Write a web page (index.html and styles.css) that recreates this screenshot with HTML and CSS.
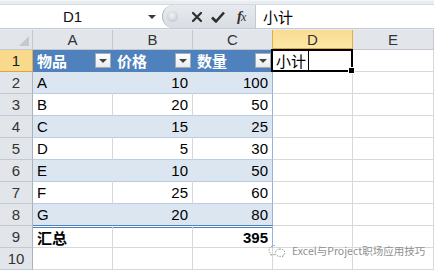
FILE: index.html
```html
<!DOCTYPE html>
<html>
<head>
<meta charset="utf-8">
<link rel="stylesheet" href="styles.css">
</head>
<body>
<div class="app">
  <div class="top">
    <div class="fbar">
      <div class="namebox">
        <span class="name">D1</span>
        <span class="nb-arrow"></span>
      </div>
      <div class="btns">
        <span class="dot"></span>
        <svg class="ico" width="14" height="14" viewBox="0 0 14 14"><path d="M3 3 L11 11 M11 3 L3 11" stroke="#2e2e2e" stroke-width="2.2" stroke-linecap="round"/></svg>
        <svg class="ico" width="16" height="14" viewBox="0 0 16 14"><path d="M2 7.5 L6 11.5 L14 2.5" fill="none" stroke="#2e2e2e" stroke-width="2.6" stroke-linejoin="round"/></svg>
        <span class="fx"><i>f</i><i class="x">x</i></span>
      </div>
      <div class="finput">小计</div>
    </div>
  </div>
  <div class="sheet">
    <div class="hd corner"><span class="tri"></span></div>
    <div class="hd col">A</div>
    <div class="hd col">B</div>
    <div class="hd col">C</div>
    <div class="hd col sel">D</div>
    <div class="hd col">E</div>

    <div class="hd rowh sel">1</div>
    <div class="c th"><span>物品</span><span class="dd"></span></div>
    <div class="c th"><span>价格</span><span class="dd"></span></div>
    <div class="c th"><span>数量</span><span class="dd"></span></div>
    <div class="c active"><span class="edit">小计</span></div>
    <div class="c"></div>

    <div class="hd rowh">2</div>
    <div class="c t band">A</div>
    <div class="c t band num">10</div>
    <div class="c t band num last">100</div>
    <div class="c"></div>
    <div class="c"></div>

    <div class="hd rowh">3</div>
    <div class="c t">B</div>
    <div class="c t num">20</div>
    <div class="c t num last">50</div>
    <div class="c"></div>
    <div class="c"></div>

    <div class="hd rowh">4</div>
    <div class="c t band">C</div>
    <div class="c t band num">15</div>
    <div class="c t band num last">25</div>
    <div class="c"></div>
    <div class="c"></div>

    <div class="hd rowh">5</div>
    <div class="c t">D</div>
    <div class="c t num">5</div>
    <div class="c t num last">30</div>
    <div class="c"></div>
    <div class="c"></div>

    <div class="hd rowh">6</div>
    <div class="c t band">E</div>
    <div class="c t band num">10</div>
    <div class="c t band num last">50</div>
    <div class="c"></div>
    <div class="c"></div>

    <div class="hd rowh">7</div>
    <div class="c t">F</div>
    <div class="c t num">25</div>
    <div class="c t num last">60</div>
    <div class="c"></div>
    <div class="c"></div>

    <div class="hd rowh">8</div>
    <div class="c t band pre">G</div>
    <div class="c t band num pre">20</div>
    <div class="c t band num last pre">80</div>
    <div class="c"></div>
    <div class="c"></div>

    <div class="hd rowh">9</div>
    <div class="c tot">汇总</div>
    <div class="c tot"></div>
    <div class="c tot num last">395</div>
    <div class="c"></div>
    <div class="c"></div>

    <div class="hd rowh">10</div>
    <div class="c"></div>
    <div class="c"></div>
    <div class="c"></div>
    <div class="c"></div>
    <div class="c"></div>
  </div>
  <div class="wm">
    <svg width="18" height="14" viewBox="0 0 18 14"><path d="M7 1.5 C3.5 1.5 1 3.6 1 6.2 C1 7.7 1.8 8.9 3 9.8 L2.5 11.6 L4.6 10.5 C5.3 10.7 6.1 10.8 7 10.8" fill="none" stroke="#a0a0a0" stroke-width="1" stroke-dasharray="1.5 1"/><path d="M12 5 C9.2 5 7.2 6.7 7.2 8.7 C7.2 10.8 9.2 12.4 12 12.4 C12.6 12.4 13.2 12.3 13.700 12.2 L15.4 13 L15 11.6 C16.2 10.9 16.9 9.9 16.9 8.7 C16.9 6.7 14.8 5 12 5 Z" fill="none" stroke="#a0a0a0" stroke-width="1" stroke-dasharray="1.5 1"/></svg>
    <span>Excel与Project职场应用技巧</span>
  </div>
</div>
</body>
</html>
```
FILE: styles.css
```css
* { box-sizing: border-box; }
html, body { margin: 0; padding: 0; }
body {
  width: 434px;
  height: 270px;
  overflow: hidden;
  background: #ffffff;
  font-family: "Liberation Sans", "Noto Sans CJK SC", sans-serif;
  color: #000;
}
.app { position: relative; width: 434px; height: 270px; }

.top {
  height: 30px;
  background: #e9ecf0;
  padding-top: 3px;
  border-top: 1px solid #f4f5f7;
}
.fbar {
  display: flex;
  height: 25px;
  background: #ffffff;
  border-top: 1px solid #d5dae0;
  border-bottom: 1px solid #c4cad2;
}
.namebox {
  width: 162px;
  display: flex;
  align-items: center;
}
.name {
  width: 145px;
  text-align: center;
  font-size: 15px;
  color: #111;
}
.nb-arrow {
  width: 0; height: 0;
  border-left: 4px solid transparent;
  border-right: 4px solid transparent;
  border-top: 4px solid #3a3a3a;
  margin-left: 3px;
}
.btns {
  width: 93px;
  display: flex;
  align-items: center;
  background: linear-gradient(#e7eaee, #d9dee4);
  border-left: 1px solid #aeb6c0;
  border-radius: 13px 0 0 13px;
  padding-left: 4px;
}
.dot {
  width: 11px; height: 11px;
  border-radius: 50%;
  background: radial-gradient(circle at 45% 40%, #f2f4f6 0, #cfd4da 60%, #b9c0c8 100%);
  margin-right: 12px;
}
.ico { display: block; margin-right: 6px; }
.fx {
  font-family: "Liberation Serif", serif;
  font-size: 15px;
  color: #333;
  margin-left: 5px;
  letter-spacing: -1px;
}
.fx i { font-weight: bold; }
.fx .x { font-size: 12px; font-weight: normal; }
.finput {
  flex: 1;
  font-family: "Noto Sans CJK SC", sans-serif;
  font-size: 15px;
  line-height: 23px;
  padding-left: 7px;
  border-left: 1px solid #c4cad2;
}

.sheet {
  display: grid;
  grid-template-columns: 33px 80px 80px 80px 80px 81px;
  grid-template-rows: 20px repeat(10, 22px);
}
.hd {
  background: #e2e6eb;
  border-right: 1px solid #c3c9d1;
  border-bottom: 1px solid #c3c9d1;
  color: #333;
  font-size: 15px;
  display: flex;
  align-items: center;
  justify-content: center;
}
.hd.rowh { border-right-color: #a9b2bd; }
.corner { position: relative; }
.tri {
  position: absolute;
  right: 3px; bottom: 3px;
  width: 0; height: 0;
  border-left: 10px solid transparent;
  border-bottom: 10px solid #c4c9cf;
}
.hd.col.sel {
  background: linear-gradient(#f9dc92, #fde7a5);
  border-left: 1px solid #e5ad4a;
  border-right: 1px solid #e5ad4a;
  border-bottom: 2px solid #e3a33a;
  margin-left: -1px;
}
.hd.rowh.sel {
  background: #f9d98c;
  border-right: 1px solid #e5ad4a;
  border-bottom: 1px solid #e3a33a;
  color: #1a1a1a;
}

.c {
  border-right: 1px solid #d8d8d8;
  border-bottom: 1px solid #d8d8d8;
  font-size: 15px;
  display: flex;
  align-items: center;
  padding: 0 4px;
  white-space: nowrap;
}
.th {
  background: #4f81bd;
  color: #ffffff;
  font-family: "Noto Sans CJK SC", sans-serif;
  font-weight: bold;
  justify-content: space-between;
  padding-right: 1px;
  border-right-color: #4f81bd;
  border-bottom-color: #4f81bd;
}
.th span:first-child { line-height: 1; }
.dd {
  width: 16px; height: 15px;
  background: linear-gradient(#ffffff, #e9ebee);
  border: 1px solid #a6abb1;
  display: flex;
  align-items: center;
  justify-content: center;
}
.dd::after {
  content: "";
  width: 0; height: 0;
  border-left: 4px solid transparent;
  border-right: 4px solid transparent;
  border-top: 4px solid #444;
}
.t { border-bottom-color: #b8cce4; }
.band { background: #dce6f1; border-right-color: #dce6f1; }
.num { justify-content: flex-end; }
.last { border-right-color: #95b3d7; }
.pre { border-bottom: 1px solid #4f81bd; }
.tot {
  font-weight: bold;
  border-top: 2px double #4f81bd;
  border-top-width: 3px;
  margin-top: -1px;
  border-top-style: double;
}

.active { position: relative; padding-left: 3px; }
.active::after {
  content: "";
  position: absolute;
  left: -2px; top: -1px; right: -1px; bottom: -1px;
  border: 2px solid #000;
}
.active::before {
  content: "";
  position: absolute;
  right: -3px; bottom: -3px;
  width: 5px; height: 5px;
  background: #000;
  border: 1px solid #fff;
  z-index: 2;
}
.edit {
  font-family: "Noto Sans CJK SC", sans-serif;
  font-size: 15px;
  border-right: 1px solid #000;
  padding-right: 2px;
  line-height: 19px;
}

.wm {
  position: absolute;
  left: 268px;
  top: 243px;
  display: flex;
  align-items: center;
  gap: 6px;
  font-family: "Noto Sans CJK SC", sans-serif;
  font-size: 10.5px;
  color: #8f8f8f;
  text-shadow: 0 0 2px #fff, 0 0 2px #fff;
}
```
